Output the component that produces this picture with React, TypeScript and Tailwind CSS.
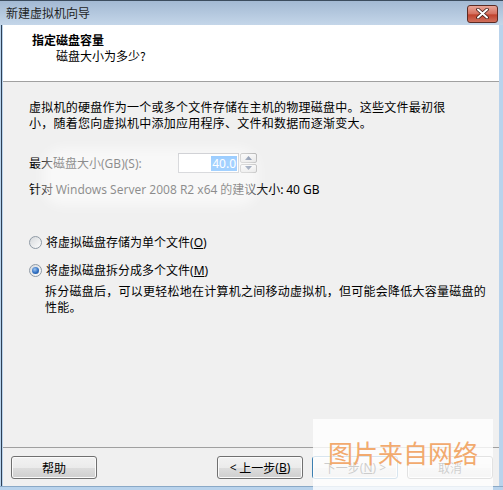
import React from 'react';

const ui = { fontFamily: '"Segoe UI", "Noto Sans", "Noto Sans CJK SC", sans-serif' };
const cjk = { fontFamily: '"Noto Sans CJK SC", "Noto Sans", sans-serif' };

const Radio = ({ checked }: { checked?: boolean }) => (
  <span className="relative inline-flex w-[13px] h-[13px] rounded-full border border-[#8f9aa5] bg-gradient-to-br from-[#d6d9dc] to-[#fdfdfd] items-center justify-center">
    {checked && (
      <span className="w-[7px] h-[7px] rounded-full bg-[radial-gradient(circle_at_40%_35%,#9cc4f0_0%,#2f6fc2_55%,#1c4b8c_100%)]" />
    )}
  </span>
);

const Button = ({ children, primary }: { children: React.ReactNode; primary?: boolean }) => (
  <button
    className={`w-[86px] h-[23px] rounded-[3px] border ${
      primary ? 'border-[#3c7fb1]' : 'border-[#707070]'
    } bg-[linear-gradient(to_bottom,#f2f2f2_0%,#ebebeb_50%,#dddddd_51%,#cfcfcf_100%)] text-[12px] text-black flex items-center justify-center shadow-[inset_0_0_0_1px_#fbfbfb]`}
  >
    {children}
  </button>
);

export default function App() {
  return (
    <div className="w-[503px] h-[490px] flex flex-col bg-[#b9d3ec] overflow-hidden relative" style={cjk}>
      {/* title bar */}
      <div className="h-[25px] shrink-0 flex items-center justify-between border-t border-[#3c4c5e] bg-[linear-gradient(to_bottom,#a3b9d3,#c4d6e9)] pl-[6px] pr-[5px]">
        <span className="text-[12px] text-[#1e1e1e] leading-none">新建虚拟机向导</span>
        <div className="w-[31px] h-[18px] mt-[1px] rounded-[3px] border border-[#5b2b24] bg-[linear-gradient(to_bottom,#e9a597_0%,#d5705f_50%,#c0422d_55%,#d0705c_100%)] flex items-center justify-center">
          <svg width="13" height="11" viewBox="0 0 13 11">
            <path d="M2 1.5 L11 9.5 M11 1.5 L2 9.5" stroke="#3b1a14" strokeWidth="3.6" strokeLinecap="round" />
            <path d="M2 1.5 L11 9.5 M11 1.5 L2 9.5" stroke="#ffffff" strokeWidth="2" strokeLinecap="round" />
          </svg>
        </div>
      </div>

      <div className="flex-1 flex ml-[1px] mr-[4px] border-l border-[#2e4055] pl-[1px] bg-[#b9d3ec]">
        <div className="flex-1 flex flex-col bg-[#f0f0f0]">
          {/* header */}
          <div className="h-[57px] bg-white border-b border-[#a0a0a0] pt-[7px] shrink-0">
            <div className="pl-[29px] text-[12px] leading-[16px] font-bold text-black">指定磁盘容量</div>
            <div className="pl-[53px] text-[12px] leading-[16px] text-black">磁盘大小为多少?</div>
          </div>

          {/* body */}
          <div className="flex-1 pl-[26px] pt-[17px] text-[12px] leading-[16px] text-black relative tracking-[0.25px]">
            <p>
              虚拟机的硬盘作为一个或多个文件存储在主机的物理磁盘中。这些文件最初很
              <br />
              小，随着您向虚拟机中添加应用程序、文件和数据而逐渐变大。
            </p>

            <div className="mt-[22px] flex items-center h-[20px] tracking-normal">
              <span className="w-[149px]">
                最大磁盘大小<span style={ui}>(GB)(S):</span>
              </span>
              <div className="w-[61px] h-[20px] border border-[#abadb3] bg-white flex items-center justify-end pr-[1px]">
                <span className="bg-[#3399ff] text-white px-[1px] leading-[15px]" style={ui}>
                  40.0
                </span>
              </div>
              <div className="ml-[1px] w-[17px] h-[20px] flex flex-col gap-[1px]">
                <div className="flex-1 border border-[#acacac] rounded-[2px] bg-[linear-gradient(to_bottom,#f6f6f6,#dedede)] flex items-center justify-center">
                  <svg width="7" height="4" viewBox="0 0 7 4">
                    <path d="M0 4 L3.5 0 L7 4 Z" fill="#4d6185" />
                  </svg>
                </div>
                <div className="flex-1 border border-[#acacac] rounded-[2px] bg-[linear-gradient(to_bottom,#f6f6f6,#dedede)] flex items-center justify-center">
                  <svg width="7" height="4" viewBox="0 0 7 4">
                    <path d="M0 0 L3.5 4 L7 0 Z" fill="#4d6185" />
                  </svg>
                </div>
              </div>
            </div>

            <div className="mt-[8px] tracking-normal">
              针对 <span style={ui}>Windows Server 2008 R2 x64</span> 的建议大小: <span style={ui}>40 GB</span>
            </div>

            <div className="mt-[36px] flex items-center gap-[4px] tracking-normal">
              <Radio />
              <span>
                将虚拟磁盘存储为单个文件<span style={ui}>(<u>O</u>)</span>
              </span>
            </div>
            <div className="mt-[11px] flex items-center gap-[4px] tracking-normal">
              <Radio checked />
              <span>
                将虚拟磁盘拆分成多个文件<span style={ui}>(<u>M</u>)</span>
              </span>
            </div>
            <p className="mt-[4px] pl-[16px]">
              拆分磁盘后，可以更轻松地在计算机之间移动虚拟机，但可能会降低大容量磁盘的
              <br />
              性能。
            </p>

            {/* faint watermark */}
            <div className="absolute left-[40px] top-[66px] w-[215px] h-[58px] rounded-[20px] bg-white/55 blur-[6px] pointer-events-none" />
          </div>

          {/* footer */}
          <div className="h-[39px] shrink-0 border-t border-[#a0a0a0] pt-[8px] flex items-start">
            <div className="ml-[8px]">
              <Button>帮助</Button>
            </div>
            <div className="ml-auto mr-[6px] flex gap-[9px]">
              <Button>
                <span style={ui}>&lt;</span>&nbsp;上一步<span style={ui}>(<u>B</u>)</span>
              </Button>
              <Button primary>
                下一步<span style={ui}>(<u>N</u>)&nbsp;&gt;</span>
              </Button>
              <Button>取消</Button>
            </div>
          </div>
        </div>
      </div>
      <div className="h-[4px] shrink-0 bg-[#b9d3ec] border-t border-[#8aa9c7]" />

      {/* bottom-right watermark */}
      <div className="absolute left-[313px] top-[419px] w-[180px] h-[71px] bg-white/80 flex items-start justify-center pt-[18px] pointer-events-none">
        <span className="text-[25px] leading-[30px] text-[#f2aa6e]" style={cjk}>
          图片来自网络
        </span>
      </div>
    </div>
  );
}
